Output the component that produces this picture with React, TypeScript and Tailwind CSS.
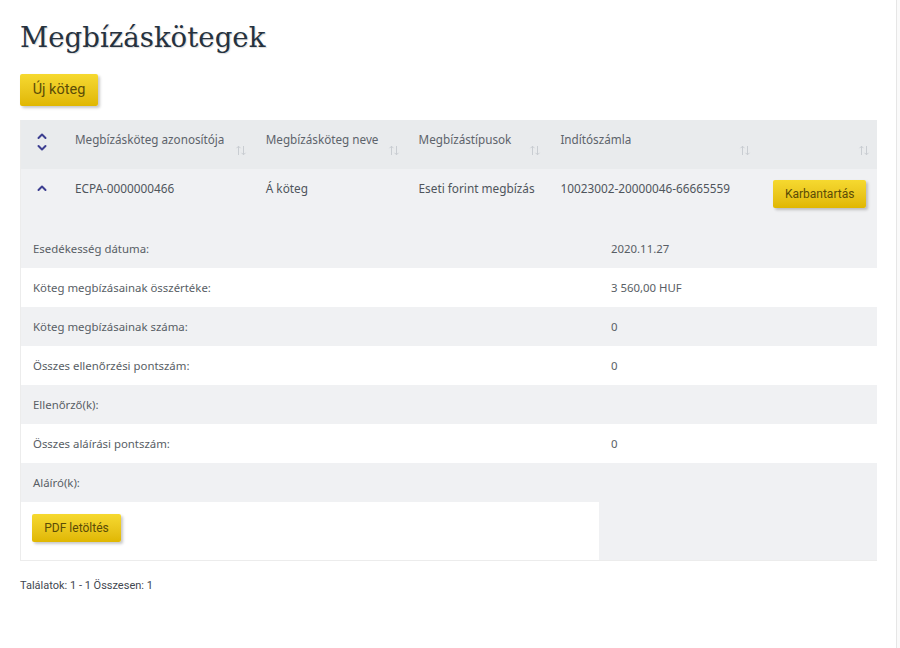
import React from 'react';

const cols = ['w-[42px]', 'w-[191px]', 'w-[153px]', 'w-[142px]', 'w-[210px]', 'w-[119px]'];

function SortIcon() {
  return (
    <svg width="12" height="11" viewBox="0 0 12 11" fill="none" stroke="#c9cdd2" strokeWidth="1">
      <path d="M3.5 10V1.2M1.5 3.2l2-2 2 2" />
      <path d="M8.5 1v8.8M6.5 7.8l2 2 2-2" />
    </svg>
  );
}

function YellowButton({ children, className }: { children: React.ReactNode; className?: string }) {
  return (
    <button
      className={`rounded-[2px] bg-gradient-to-b from-[#f6d92f] to-[#e0b700] text-[#5b4c07] shadow-[2px_2px_3px_rgba(0,0,0,0.22)] ${className ?? ''}`}
      style={{ fontFamily: 'Roboto, "Liberation Sans", sans-serif' }}
    >
      {children}
    </button>
  );
}

const details: { label: string; value: string }[] = [
  { label: 'Esedékesség dátuma:', value: '2020.11.27' },
  { label: 'Köteg megbízásainak összértéke:', value: '3 560,00 HUF' },
  { label: 'Köteg megbízásainak száma:', value: '0' },
  { label: 'Összes ellenőrzési pontszám:', value: '0' },
  { label: 'Ellenőrző(k):', value: '' },
  { label: 'Összes aláírási pontszám:', value: '0' },
  { label: 'Aláíró(k):', value: '' },
];

export default function App() {
  const headers = ['Megbízásköteg azonosítója', 'Megbízásköteg neve', 'Megbízástípusok', 'Indítószámla', ''];
  const row = ['ECPA-0000000466', 'Á köteg', 'Eseti forint megbízás', '10023002-20000046-66665559'];

  return (
    <div className="flex min-h-[648px] bg-[#fafafa]">
      <div
        className="w-[897px] border-r border-[#e6e6e6] bg-white px-5 pb-10"
        style={{ fontFamily: '"Noto Sans", "Open Sans", sans-serif' }}
      >
        <h1
          className="pt-[19px] text-[27.6px] leading-[38px] text-[#26323f]"
          style={{ fontFamily: '"DejaVu Serif", "Liberation Serif", serif', textShadow: '1px 1px 1px rgba(0,0,0,0.15)' }}
        >
          Megbízáskötegek
        </h1>

        <YellowButton className="mt-[17px] h-[32px] w-[78px] text-[14.5px]">Új köteg</YellowButton>

        <div className="mt-[14px] w-[857px] border-b border-l border-[#ececec]">
          {/* header */}
          <div className="flex h-[49px] bg-[#e9ebed] text-[11.7px] text-[#5d636b]">
            <div className={`${cols[0]} flex items-start justify-center pt-[12px]`}>
              <svg width="12" height="20" viewBox="0 0 12 20" fill="none" stroke="#3d3f91" strokeWidth="2" strokeLinecap="round" strokeLinejoin="round">
                <path d="M2.5 6l3.5-3.5L9.5 6" />
                <path d="M2.5 14l3.5 3.5 3.5-3.5" />
              </svg>
            </div>
            {headers.map((h, i) => (
              <div key={i} className={`${cols[i + 1]} relative pl-3 pt-[11px]`}>
                <span>{h}</span>
                <span className="absolute right-[7px] top-[25px]">
                  <SortIcon />
                </span>
              </div>
            ))}
          </div>

          {/* data row */}
          <div className="flex h-[60px] bg-[#f0f1f3] text-[11.8px] text-[#4f555c]">
            <div className={`${cols[0]} flex justify-center pt-[14px]`}>
              <svg width="12" height="10" viewBox="0 0 12 10" fill="none" stroke="#3d3f91" strokeWidth="2" strokeLinecap="round" strokeLinejoin="round">
                <path d="M2.5 7l3.5-3.5L9.5 7" />
              </svg>
            </div>
            {row.map((c, i) => (
              <div key={i} className={`${cols[i + 1]} pl-3 pt-[11px]`}>
                {c}
              </div>
            ))}
            <div className={`${cols[5]} pt-[11px] pl-[15px]`}>
              <YellowButton className="h-[28px] w-[93px] text-[12px]">Karbantartás</YellowButton>
            </div>
          </div>

          {/* details */}
          {details.map((d, i) => (
            <div
              key={d.label}
              className={`flex h-[39px] items-center text-[11.4px] text-[#585e65] ${i % 2 === 0 ? 'bg-[#f0f1f3]' : 'bg-white'}`}
            >
              <div className="w-[578px] pl-3">{d.label}</div>
              <div className="pl-3">{d.value}</div>
            </div>
          ))}

          <div className="flex h-[58px]">
            <div className="w-[578px] bg-white pl-[11px] pt-[12px]">
              <YellowButton className="h-[28px] w-[89px] text-[12px]">PDF letöltés</YellowButton>
            </div>
            <div className="flex-1 bg-[#f0f1f3]" />
          </div>
        </div>

        <p
          className="mt-[17px] text-[11px] text-[#3f4750]"
          style={{ fontFamily: 'Roboto, "Liberation Sans", sans-serif' }}
        >
          Találatok: 1 - 1 Összesen: 1
        </p>
      </div>
    </div>
  );
}
